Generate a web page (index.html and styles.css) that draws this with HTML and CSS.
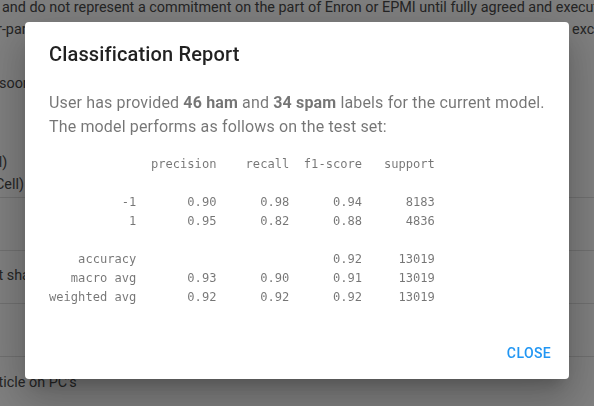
FILE: index.html
```html
<!DOCTYPE html>
<html lang="en">
<head>
<meta charset="utf-8">
<title>Classification Report</title>
<link rel="stylesheet" href="styles.css">
</head>
<body>
<div class="page">
  <div class="email">
    <div class="line first-line">and do not represent a commitment on the part of Enron or EPMI until fully agreed and executed by the parties</div>
    <div class="line cut">r-party. The above confirmation is not intended to be binding within this E-mail transaction except in such</div>
    <div class="line soon">soon as possible</div>
  </div>
  <div class="row first">
    <div class="line cut2">(Nil)</div>
    <div class="line cut3">(Cell)</div>
  </div>
  <div class="row"></div>
  <div class="row mid"><div class="line cut4">that shall be sent</div></div>
  <div class="row"></div>
  <div class="row last"><div class="line cut5">Article on PC's</div></div>
</div>

<div class="backdrop">
  <div class="dialog" role="dialog">
    <h2 class="dialog-title">Classification Report</h2>
    <div class="dialog-content">
      <p class="dialog-text">User has provided <b>46 ham</b> and <b>34 spam</b> labels for the current model.<br>The model performs as follows on the test set:</p>
<pre class="report">              precision    recall  f1-score   support

          -1       0.90      0.98      0.94      8183
           1       0.95      0.82      0.88      4836

    accuracy                           0.92     13019
   macro avg       0.93      0.90      0.91     13019
weighted avg       0.92      0.92      0.92     13019</pre>
    </div>
    <div class="dialog-actions">
      <button class="btn">Close</button>
    </div>
  </div>
</div>
</body>
</html>
```
FILE: styles.css
```css
html, body {
  margin: 0;
  padding: 0;
  background: #ffffff;
  overflow: hidden;
}
body {
  width: 594px;
  height: 406px;
  font-family: Roboto, "Liberation Sans", sans-serif;
}
.page {
  color: #4a4a4a;
  font-size: 14.4px;
  line-height: 22px;
  padding-top: 1px;
  margin-top: -4px;
}
.line {
  white-space: nowrap;
}
.email {
  height: 155px;
}
.first-line {
  margin-left: 2px;
}
.cut { margin-left: -3px; }
.soon { margin-top: 32px; margin-left: -1px; }
.row {
  box-sizing: border-box;
  height: 53px;
  border-bottom: 1px solid #e0e0e0;
}
.row.first {
  height: 46px;
}
.cut2 { margin-left: -20px; }
.cut3 { margin-left: -10px; }
.row.mid { padding-top: 14px; }
.cut4 { margin-left: -22px; }
.row.last {
  border-bottom: 0;
  padding-top: 15px;
}
.cut5 { margin-left: -16px; }

.backdrop {
  position: fixed;
  inset: 0;
  background: rgba(0, 0, 0, 0.5);
  display: flex;
  justify-content: center;
  align-items: flex-start;
}
.dialog {
  margin-top: 22px;
  width: 544px;
  height: 357px;
  background: #ffffff;
  border-radius: 4px;
  box-shadow: 0 11px 15px -7px rgba(0,0,0,0.2), 0 24px 38px 3px rgba(0,0,0,0.14), 0 9px 46px 8px rgba(0,0,0,0.12);
  display: flex;
  flex-direction: column;
  box-sizing: border-box;
}
.dialog-title {
  margin: 0;
  padding: 16px 24px;
  font-size: 20px;
  font-weight: 500;
  line-height: 32px;
  letter-spacing: 0.0075em;
  color: rgba(0, 0, 0, 0.87);
}
.dialog-content {
  flex: 1;
  padding: 5px 24px 0;
}
.dialog-text {
  margin: 0 0 16px;
  font-size: 16px;
  line-height: 24px;
  color: rgba(0, 0, 0, 0.54);
  letter-spacing: 0.00938em;
}
.dialog-text b {
  font-weight: 700;
}
.report {
  margin: 0;
  font-family: "DejaVu Sans Mono", "Liberation Mono", monospace;
  font-size: 12.1px;
  line-height: 19px;
  color: rgba(0, 0, 0, 0.54);
}
.dialog-actions {
  display: flex;
  justify-content: flex-end;
  padding: 8px;
}
.btn {
  font-family: Roboto, "Liberation Sans", sans-serif;
  font-size: 14px;
  font-weight: 500;
  text-transform: uppercase;
  letter-spacing: 0.02857em;
  color: #2196f3;
  background: transparent;
  border: 0;
  padding: 6px 8px;
  min-width: 64px;
  height: 36px;
  line-height: 24px;
  border-radius: 4px;
  cursor: pointer;
}
```
